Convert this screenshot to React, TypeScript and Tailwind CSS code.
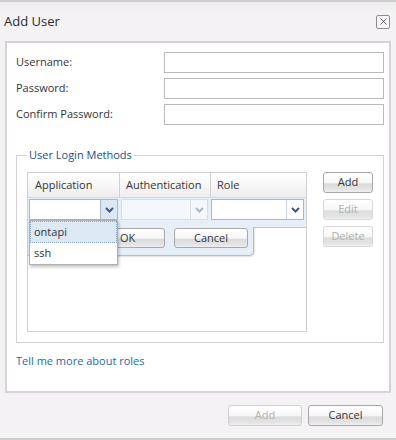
import { X } from 'lucide-react'

const FONT = { fontFamily: '"Open Sans", "Liberation Sans", sans-serif' }

const btn =
  'flex items-center justify-center rounded-[3px] border text-[11px] bg-[linear-gradient(to_bottom,#ffffff_0%,#f7f7f7_50%,#dcdcdc_58%,#e4e4e4_88%,#f0f0f0_100%)]'

function Chevron({ color = '#3f5a7e' }: { color?: string }) {
  return (
    <svg width="9" height="6" viewBox="0 0 9 6">
      <path d="M1 1 L4.5 4.5 L8 1" fill="none" stroke={color} strokeWidth="2" />
    </svg>
  )
}

function Select({
  w,
  active = false,
  disabled = false,
}: {
  w: string
  active?: boolean
  disabled?: boolean
}) {
  return (
    <div
      className={`flex h-[21px] ${w} border ${
        disabled ? 'border-[#d6dde6] bg-[#f4f7fb]' : 'border-[#a9b7c9] bg-white'
      }`}
    >
      <div className="flex-1" />
      <div
        className={`flex w-[17px] items-center justify-center border-l ${
          active ? 'border-[#a9b7c9] bg-[#dce7f5]' : disabled ? 'border-[#d6dde6]' : 'border-[#c9d3df]'
        }`}
      >
        <Chevron color={disabled ? '#a8b6c8' : '#3f5a7e'} />
      </div>
    </div>
  )
}

export default function App() {
  return (
    <div
      style={FONT}
      className="flex h-[440px] w-[396px] flex-col border-t-2 border-b-2 border-[#cdcdcd] bg-[#f5f2f5] text-[11px] text-[#333]"
    >
      <header className="flex h-[39px] items-center justify-between bg-[linear-gradient(to_bottom,#ececec,#f5f2f5_30%)] pl-[4px] pr-[6px]">
        <span className="text-[13px] text-[#2b2b2b]">Add User</span>
        <button className="flex h-[14px] w-[14px] items-center justify-center rounded-[2px] border border-[#8e8e8e] bg-[#f7f7f7]">
          <X className="h-[11px] w-[11px] text-[#333]" strokeWidth={1.6} />
        </button>
      </header>

      <div className="mx-[5px] flex h-[352px] flex-col border-2 border-[#d5d3d5] bg-white pl-[9px] pr-[5px] pt-[9px]">
        <div className="flex flex-col gap-[5px]">
          {['Username:', 'Password:', 'Confirm Password:'].map((l) => (
            <div key={l} className="flex h-[21px] items-center">
              <span className="w-[148px]">{l}</span>
              <input className="h-[21px] w-[220px] border border-[#b8b8c0] bg-white outline-none" />
            </div>
          ))}
        </div>

        <fieldset className="mt-[22px] h-[196px] w-[368px] border border-[#d3d3d3] pl-[10px] pr-[10px]">
          <legend className="px-[2px] text-[11px] leading-[16px] text-[#1d4f7c]">
            User Login Methods
          </legend>
          <div className="mt-[9px] flex">
            <div className="relative flex h-[160px] w-[280px] flex-col border border-[#cfcfcf] bg-white">
              <div className="flex h-[25px] border-b border-[#d8d8d8] bg-[linear-gradient(to_bottom,#ffffff,#eeeeee)]">
                <div className="flex w-[92px] items-center border-r border-[#d0d0d0] pl-[7px]">Application</div>
                <div className="flex w-[91px] items-center border-r border-[#d0d0d0] pl-[6px]">Authentication</div>
                <div className="flex flex-1 items-center pl-[6px]">Role</div>
              </div>
              <div className="relative">
                <div className="flex h-[30px] gap-[3px] border-b border-[#b9cbe2] bg-[#e6eef8] px-[1px] pt-[1px]">
                  <Select w="w-[89px]" active />
                  <Select w="w-[87px]" disabled />
                  <Select w="w-[93px]" />
                </div>
                <div className="-mt-px flex h-[29px] w-[226px] items-start justify-end gap-[9px] rounded-br-[5px] border-b border-r border-[#a9bfdc] bg-[#e6eef8] pr-[5px] pt-[1px] shadow-[1px_1px_1px_rgba(0,0,0,0.12)]">
                  <button className={`${btn} h-[20px] w-[76px] justify-start border-[#a8a8a8] pl-[30px]`}>OK</button>
                  <button className={`${btn} h-[20px] w-[74px] border-[#a8a8a8]`}>Cancel</button>
                </div>
                <div className="absolute left-[1px] top-[22px] w-[89px] border border-[#b0b0b0] bg-white shadow-[1px_2px_3px_rgba(0,0,0,0.25)]">
                  <div className="flex h-[22px] items-center border border-dotted border-[#8aa6c8] bg-[#dde8f5] pl-[3px]">ontapi</div>
                  <div className="flex h-[21px] items-center pl-[4px]">ssh</div>
                </div>
              </div>
            </div>
            <div className="ml-[16px] flex flex-col gap-[6px]">
              <button className={`${btn} h-[21px] w-[50px] border-[#a8a8a8]`}>Add</button>
              <button className={`${btn} h-[21px] w-[50px] border-[#d8d8d8] text-[#b0b0b0]`}>Edit</button>
              <button className={`${btn} h-[21px] w-[50px] border-[#d8d8d8] text-[#b0b0b0]`}>Delete</button>
            </div>
          </div>
        </fieldset>

        <a className="mt-[10px] text-[11px] text-[#1f6aa5]">Tell me more about roles</a>
      </div>

      <div className="flex flex-1 items-center justify-end gap-[6px] pr-[13px]">
        <button className={`${btn} h-[21px] w-[74px] border-[#d0d0d0] text-[#b3b3b3]`}>Add</button>
        <button className={`${btn} h-[21px] w-[75px] border-[#a8a8a8]`}>Cancel</button>
      </div>
    </div>
  )
}
